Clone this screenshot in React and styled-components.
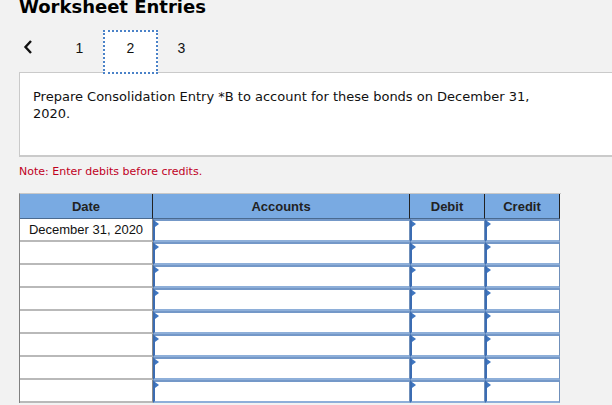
import styled, { createGlobalStyle } from "styled-components"

const GlobalStyle = createGlobalStyle`
  html, body {
    margin: 0;
    padding: 0;
    background: #f2f2f2;
    overflow: hidden;
  }
`

const Page = styled.div`
  width: 612px;
  height: 405px;
  padding-left: 19px;
  box-sizing: border-box;
  overflow: hidden;
  font-family: "DejaVu Sans", Verdana, sans-serif;
  color: #111;
`

const Title = styled.h1`
  margin: -3px 0 0;
  font-size: 18px;
  line-height: 20px;
  font-weight: bold;
  color: #000;
`

// tabs for the entries
const TabBar = styled.div`
  position: relative;
  z-index: 1;
  display: flex;
  align-items: flex-start;
  height: 44px;
  margin-top: 13px;
  margin-bottom: -2px;
`

const Back = styled.div`
  width: 35px;
  height: 44px;
  display: flex;
  align-items: flex-start;
  padding: 10px 0 0 4px;
  box-sizing: border-box;
`

const Tab = styled.div`
  width: ${p => (p.$active ? "55px" : "51px")};
  height: 44px;
  margin: 0 ${p => (p.$active ? "-2px" : "0")};
  box-sizing: border-box;
  padding-top: ${p => (p.$active ? "8px" : "10px")};
  text-align: center;
  font-family: "Liberation Sans", Arial, sans-serif;
  font-size: 14px;
  line-height: 16px;
  color: #111;
  background: ${p => (p.$active ? "#fff" : "transparent")};
  border: ${p => (p.$active ? "2px dotted #4a82c8" : "none")};
`

const Prompt = styled.div`
  width: 640px;
  height: 85px;
  box-sizing: border-box;
  background: #fff;
  border: 1px solid #cacaca;
  border-bottom-width: 2px;
  padding: 15px 0 0 13px;
`

const PromptText = styled.p`
  margin: 0;
  width: 520px;
  font-size: 13px;
  line-height: 17px;
`

const Note = styled.div`
  margin-top: 8px;
  font-size: 11px;
  line-height: 14px;
  color: #c0001e;
`

const Table = styled.div`
  margin-top: 14px;
  width: 541px;
  display: grid;
  grid-template-columns: 133px 257px 75px 75px;
  border-top: 1px solid #c8c8c8;
  border-left: 1px solid #808080;
`

const HeadCell = styled.div`
  height: 25px;
  box-sizing: border-box;
  background: #79aae2;
  border-right: 1px solid #222;
  border-bottom: 1px solid #4a6a90;
  font-family: "Liberation Sans", Arial, sans-serif;
  font-size: 13px;
  font-weight: bold;
  line-height: 25px;
  text-align: center;
  color: #222;
`

const DateCell = styled.div`
  height: 23px;
  box-sizing: border-box;
  background: #fff;
  border-bottom: 2px solid #b9b9b9;
  border-right: 1px solid #8a8a8a;
  font-family: "Liberation Sans", Arial, sans-serif;
  font-size: 13px;
  line-height: 22px;
  text-align: center;
  color: #111;
`

const InputCell = styled.div`
  position: relative;
  height: 23px;
  box-sizing: border-box;
  background: #fff;
  border-left: 2px solid #3b6cb2;
  border-top: 2px solid #7498c8;
  border-bottom: 2px solid #8eafd9;
  border-right: 1px solid #6f8fba;

  &::before {
    content: '';
    position: absolute;
    left: 0;
    top: 0;
    border-top: 3px solid transparent;
    border-bottom: 3px solid transparent;
    border-left: 4px solid #3f76c0;
  }
`

const rows = ["December 31, 2020", "", "", "", "", "", "", ""]

const App = () => {
  return (
    <Page>
      <GlobalStyle />
      <Title>Worksheet Entries</Title>
      <TabBar>
        <Back>
          <svg width="10" height="14" viewBox="0 0 10 14">
            <polyline points="8,1 2.5,7 8,13" fill="none" stroke="#111" strokeWidth="2.4" />
          </svg>
        </Back>
        <Tab>1</Tab>
        <Tab $active>2</Tab>
        <Tab>3</Tab>
      </TabBar>
      <Prompt>
        <PromptText>
          Prepare Consolidation Entry *B to account for these bonds on December 31, 2020.
        </PromptText>
      </Prompt>
      <Note>Note: Enter debits before credits.</Note>
      <Table>
        <HeadCell>Date</HeadCell>
        <HeadCell>Accounts</HeadCell>
        <HeadCell>Debit</HeadCell>
        <HeadCell>Credit</HeadCell>
        {rows.map((date, i) => [
          <DateCell key={`d${i}`}>{date}</DateCell>,
          <InputCell key={`a${i}`} />,
          <InputCell key={`b${i}`} />,
          <InputCell key={`c${i}`} />,
        ])}
      </Table>
    </Page>
  )
}

export default App
